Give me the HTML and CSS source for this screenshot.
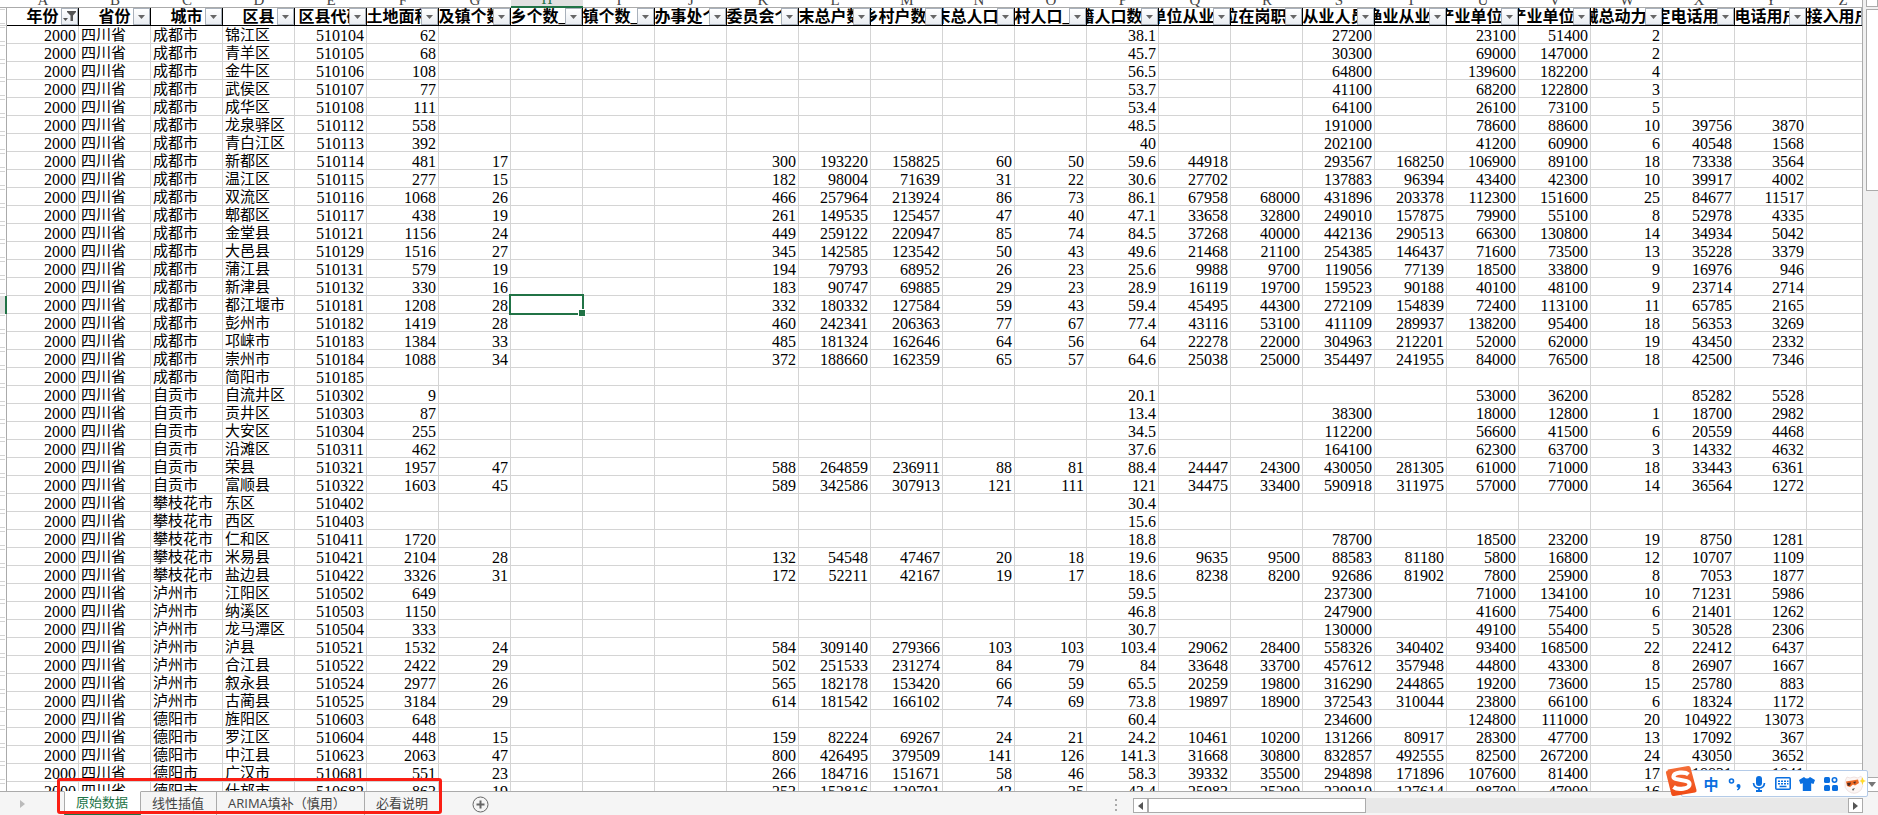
FILE: index.html
```
<!DOCTYPE html>
<html lang="zh-CN">
    <head>
        <meta charset="utf-8">
        <title>原始数据</title>
        <link rel="stylesheet" href="styles.css">
    </head>
    <body>
        <main class="workspace">
            <div class="sheet">
                <table class="grid">
                    <colgroup id="cols"></colgroup>
                    <thead>
                        <tr class="letters" id="letters"></tr>
                        <tr class="titles" id="titles"></tr>
                    </thead>
                    <tbody id="rows"></tbody>
                </table>
            </div>
            <div class="vscroll">
                <button class="vscroll-up" aria-label="向上滚动"></button>
                <div class="vscroll-thumb"></div>
                <button class="vscroll-down" aria-label="向下滚动">
                    <svg width="8" height="5" viewBox="0 0 8 5"><path d="M0 0h8L4 5z" fill="#777"/></svg>
                </button>
            </div>
        </main>

        <footer class="bar">
            <button class="bar-nav" aria-label="下一张工作表">
                <svg width="5" height="8" viewBox="0 0 5 8"><path d="M0 0l5 4-5 4z" fill="#bbb"/></svg>
            </button>
            <nav class="tabs">
                <button class="tab tab-active">原始数据</button>
                <button class="tab">线性插值</button>
                <button class="tab tab-wide">ARIMA填补（慎用）</button>
                <button class="tab tab-last">必看说明</button>
                <span class="marker"></span>
            </nav>
            <button class="add" aria-label="新工作表">
                <svg width="17" height="17" viewBox="0 0 17 17" fill="none" stroke="#666">
                    <circle cx="8.5" cy="8.5" r="7.5"/>
                    <path d="M8.5 4.5v8M4.5 8.5h8" stroke-width="2"/>
                </svg>
            </button>
            <svg class="grip" width="3" height="13" viewBox="0 0 3 13" fill="#aaa">
                <path d="M0 0h2v2H0zM0 5h2v2H0zM0 10h2v2H0z"/>
            </svg>
            <div class="hscroll">
                <button class="hscroll-btn" aria-label="向左滚动">
                    <svg width="5" height="8" viewBox="0 0 5 8"><path d="M5 0L0 4l5 4z" fill="#555"/></svg>
                </button>
                <div class="hscroll-thumb"></div>
                <button class="hscroll-btn hscroll-right" aria-label="向右滚动">
                    <svg width="5" height="8" viewBox="0 0 5 8"><path d="M0 0l5 4-5 4z" fill="#555"/></svg>
                </button>
            </div>
        </footer>

        <div class="ime">
            <svg class="ime-logo" width="32" height="32" viewBox="0 0 32 32">
                <defs>
                    <linearGradient id="flame" x1="0" y1="0" x2="0" y2="1">
                        <stop offset="0" stop-color="#f4703a"/>
                        <stop offset="1" stop-color="#f04a14"/>
                    </linearGradient>
                </defs>
                <path d="M3 5.500Q2 5 3 4.500L23 1q2-.3 2.500 1.500L31.500 25q.5 2-1.500 2.500L9 31q-2 .3-2.600-1.500L1 8q-.5-2 2-2.500z" fill="url(#flame)"/>
                <path d="M23.500 9.500C20 6.500 9 7 8.500 11.500 8 16 24 14 24.500 19c.4 5-11.500 6.500-16 3" fill="none" stroke="#fff" stroke-width="4.200"/>
            </svg>
            <div class="ime-keys">
                <button class="ime-key">中</button>
                <button class="ime-key" aria-label="标点">
                    <svg width="14" height="16" viewBox="0 0 14 16">
                        <circle cx="3.500" cy="5" r="2" fill="none" stroke="#0a6fe0" stroke-width="1.600"/>
                        <path d="M8.500 10a2 2 0 1 1 4 0q0 3-3 4.500l-.6-1q1.300-.8 1.400-1.700-1.800-.2-1.800-1.800z" fill="#0a6fe0"/>
                    </svg>
                </button>
                <button class="ime-key" aria-label="语音">
                    <svg width="14" height="16" viewBox="0 0 14 16" fill="none" stroke="#0a6fe0">
                        <rect x="4" y="0" width="6" height="10" rx="3" fill="#0a6fe0" stroke="none"/>
                        <path d="M1.500 7q.5 5 5.500 5t5.500-5" stroke-width="1.700"/>
                        <path d="M7 12v2M4 15h6" stroke-width="1.800"/>
                    </svg>
                </button>
                <button class="ime-key" aria-label="键盘">
                    <svg width="16" height="13" viewBox="0 0 16 13">
                        <rect x=".8" y=".8" width="14.400" height="11.400" rx="1" fill="none" stroke="#0a6fe0" stroke-width="1.600"/>
                        <path d="M3 3.500h2v1.600H3zM6 3.500h2v1.600H6zM9 3.500h2v1.600H9zM12 3.500h1.500v1.600H12zM3 6h2v1.600H3zM6 6h2v1.600H6zM9 6h2v1.600H9zM12 6h1.500v1.600H12zM4.500 8.800h7v1.500h-7z" fill="#0a6fe0"/>
                    </svg>
                </button>
                <button class="ime-key" aria-label="皮肤">
                    <svg width="16" height="14" viewBox="0 0 16 14">
                        <path d="M0 3L5 0q3 3 6 0l5 3-1.500 4-2.300-.7V14H3.800V6.300L1.500 7z" fill="#0a6fe0"/>
                    </svg>
                </button>
                <button class="ime-key" aria-label="工具箱">
                    <svg width="14" height="14" viewBox="0 0 14 14" fill="#0a6fe0">
                        <rect x="0" y="0" width="6" height="6" rx="1.500"/>
                        <rect x="0" y="8" width="6" height="6" rx="1.500"/>
                        <rect x="8" y="8" width="6" height="6" rx="1.500"/>
                        <circle cx="10.500" cy="3" r="2.200" fill="none" stroke="#0a6fe0" stroke-width="1.600"/>
                    </svg>
                </button>
                <button class="ime-key" aria-label="表情">
                    <svg width="22" height="20" viewBox="0 0 22 20">
                        <path d="M3 3l3 1q4-2 8 0l3-2 1 5q2 5-1 9-6 6-13 1-4-3-3-8 0-3 2-6z" fill="#fdf6f4" stroke="#ead9d6" stroke-width=".7"/>
                        <path d="M2 7.500l12-2 1 3.500-4 2.500-2-1-3 2.500-3-1z" fill="#ee6a26"/>
                        <path d="M3 9l4-.5-1 3-2 .5zM9 8l3-.5-1 2.500z" fill="#4a2a20"/>
                        <path d="M8 15l3-1-2 3z" fill="#555"/>
                        <path d="M18.500 3l1 3 2.500 1-2.500 1-1 3-1-3-2-1 2-1z" fill="#ffd928"/>
                    </svg>
                </button>
            </div>
        </div>

        <script src="script.js"></script>
    </body>
</html>
```
FILE: styles.css
```
* {
    box-sizing: border-box;
}
body {
    background: #f5f5f5;
    color: #000;
    display: flex;
        flex-direction: column;
    font-family: "Liberation Serif", "Noto Sans CJK SC", serif;
    font-size: 16px;
    height: 100vh;
    margin: 0;
    overflow: hidden;
}
button {
    background: none;
    border: 0;
    color: inherit;
    font: inherit;
    margin: 0;
    padding: 0;
}
svg {
    display: block;
    flex-shrink: 0;
}

/* sheet */
.workspace {
    display: flex;
    flex: 1;
    min-height: 0;
}
.sheet {
    background: #fff;
    border-right: solid 1px #ababab;
    flex: 1;
    min-width: 0;
    overflow: hidden;
}
.grid {
    border-collapse: separate;
    border-spacing: 0;
    table-layout: fixed;
    width: 1879px;
}
.col-index {
    width: 7px;
}
.col {
    width: 72px;
}
.grid th,
.grid td {
    padding: 0;
}
.letters th {
    background: #fff;
    border-bottom: solid 1px #ababab;
    color: #444;
    font-size: 15px;
    font-weight: normal;
    height: 8px;
    line-height: 8px;
}
.letter {
    display: flex;
        align-items: flex-end;
        justify-content: center;
    height: 7px;
    line-height: 14px;
    overflow: hidden;
}
.letters .picked {
    background: #e1e1e1;
    border-bottom: solid 2px #217346;
    color: #217346;
}
.picked .letter {
    height: 6px;
}
.titles th {
    border-bottom: solid 1px #000;
    border-right: solid 1px #000;
    height: 18px;
    position: relative;
}
.titles .index {
    border-bottom-color: #d4d4d4;
    border-right-color: #ababab;
}
.title {
    display: flex;
        justify-content: center;
    height: 17px;
    line-height: 17px;
    overflow: hidden;
    white-space: nowrap;
}
.filter {
    background: linear-gradient(#fff, #e9edf2);
    border: solid 1px #a9b1bb;
    display: flex;
        align-items: center;
        justify-content: center;
    height: 17px;
    position: absolute;
        right: 0;
        top: 0;
    width: 17px;
}
.grid td {
    border-bottom: solid 1px #d4d4d4;
    border-right: solid 1px #d4d4d4;
    height: 18px;
    line-height: 15px;
    padding: 2px 2px 0 0;
    text-align: right;
    white-space: nowrap;
}
.grid .name {
    font-size: 15px;
    padding: 2px 0 0 2px;
    text-align: left;
}
/* double ticks where rows are hidden by the filter */
.index {
    background: linear-gradient(#d4d4d4, #d4d4d4) 0 1px / 5px 1px no-repeat,
        linear-gradient(#d4d4d4, #d4d4d4) 0 15px / 5px 1px no-repeat;
    border-right: solid 1px #ababab;
}
.index-picked {
    background: #e1e1e1;
    border-right: solid 2px #217346;
}
.grid .selected {
    position: relative;
}
.selected::before {
    border: solid 2px #217346;
    content: "";
    inset: -2px;
    position: absolute;
}
.selected::after {
    background: #217346;
    border: solid 1px #fff;
    bottom: -4px;
    content: "";
    height: 6px;
    position: absolute;
    right: -4px;
    width: 6px;
}

/* vertical scrollbar */
.vscroll {
    background: #f0f0f0;
    display: flex;
        flex-direction: column;
    padding-left: 3px;
    width: 15px;
}
.vscroll-up {
    background: #fff;
    border: solid 1px #ababab;
    border-top: 0;
    height: 7px;
}
.vscroll-thumb {
    background: #fff;
    border: solid 1px #ababab;
    border-right: 0;
    height: 182px;
    margin-top: 2px;
}
.vscroll-down {
    background: #fff;
    border-top: solid 1px #ababab;
    display: flex;
        align-items: center;
        justify-content: center;
    height: 14px;
    margin-top: auto;
}

/* sheet tabs */
.bar {
    align-items: stretch;
    color: #444;
    display: flex;
    font-family: "Open Sans", "Noto Sans CJK SC", sans-serif;
    font-size: 13px;
    height: 24px;
}
.bar-nav {
    border-top: solid 1px #ababab;
    display: flex;
        align-items: center;
        justify-content: center;
    padding-right: 20px;
    width: 64px;
}
.tabs {
    display: flex;
    position: relative;
}
.tab {
    border-right: solid 1px #ababab;
    border-top: solid 1px #ababab;
    line-height: 23px;
    padding: 0 12px 0 11px;
    white-space: nowrap;
}
.tab-active {
    background: #fff;
    border-bottom: solid 2px #217346;
    border-left: solid 1px #ababab;
    border-top-color: #fff;
    color: #217346;
    line-height: 21px;
}
.tab-wide {
    text-align: left;
    width: 148px;
}
.tab-last {
    border-right: 0;
}
.marker {
    border: solid 3px #fb1e14;
    border-radius: 3px;
    inset: -13px -2px 1px -7px;
    pointer-events: none;
    position: absolute;
}
.add {
    border-top: solid 1px #ababab;
    display: flex;
        align-items: center;
    flex: 1;
    padding: 2px 0 0 32px;
}
.grip {
    border-top: solid 1px #ababab;
    box-sizing: content-box;
    height: 13px;
    padding: 7px 15px 3px 0;
}
.hscroll {
    background: #e8e8e8;
    background-clip: content-box;
    border-top: solid 1px #ababab;
    display: flex;
    flex: 0 0 745px;
    padding: 6px 15px 2px 0;
}
.hscroll-btn {
    background: #fff;
    border: solid 1px #ababab;
    display: flex;
        align-items: center;
        justify-content: center;
    width: 15px;
}
.hscroll-right {
    margin-left: auto;
}
.hscroll-thumb {
    background: #fff;
    border: solid 1px #ababab;
    width: 218px;
}

/* floating input method bar */
.ime {
    align-items: flex-end;
    bottom: 18px;
    display: flex;
    position: absolute;
    right: 10px;
}
.ime-logo {
    margin-right: -16px;
    z-index: 1;
}
.ime-keys {
    background: #fff;
    border: solid 1px #b4cbe8;
    border-radius: 2px;
    display: flex;
    height: 27px;
    padding-left: 17px;
}
.ime-key {
    color: #0a6fe0;
    display: flex;
        align-items: center;
        justify-content: center;
    font-family: "Noto Sans CJK SC", sans-serif;
    font-size: 15px;
    font-weight: bold;
    line-height: 24px;
    width: 24px;
}
```
FILE: script.js
```
const titles = [
    '年份', '省份', '城市', '区县', '区县代码', '行政区域土地面积_平方公里', '乡及镇个数_个',
    '乡个数_个', '镇个数_个', '街道办事处个数_个', '村民委员会个数_个', '年末总户数_户',
    '乡村户数_户', '年末总人口_万人', '乡村人口_万人', '户籍人口数_万人', '城镇单位从业人员_人',
    '城镇单位在岗职工人数_人', '乡村从业人员数_人', '农林牧渔业从业人员数_人', '第二产业单位人数_人',
    '第三产业单位人数_人', '农业机械总动力_万千瓦特', '固定电话用户_户', '移动电话用户_万户',
    '宽带接入用户数_户',
];

// city, county, code, then columns F-G and K-Y (H-J and Z are empty)
const data = `
成都市,锦江区,510104,62,,,,,,,38.1,,,27200,,23100,51400,2,,
成都市,青羊区,510105,68,,,,,,,45.7,,,30300,,69000,147000,2,,
成都市,金牛区,510106,108,,,,,,,56.5,,,64800,,139600,182200,4,,
成都市,武侯区,510107,77,,,,,,,53.7,,,41100,,68200,122800,3,,
成都市,成华区,510108,111,,,,,,,53.4,,,64100,,26100,73100,5,,
成都市,龙泉驿区,510112,558,,,,,,,48.5,,,191000,,78600,88600,10,39756,3870
成都市,青白江区,510113,392,,,,,,,40,,,202100,,41200,60900,6,40548,1568
成都市,新都区,510114,481,17,300,193220,158825,60,50,59.6,44918,,293567,168250,106900,89100,18,73338,3564
成都市,温江区,510115,277,15,182,98004,71639,31,22,30.6,27702,,137883,96394,43400,42300,10,39917,4002
成都市,双流区,510116,1068,26,466,257964,213924,86,73,86.1,67958,68000,431896,203378,112300,151600,25,84677,11517
成都市,郫都区,510117,438,19,261,149535,125457,47,40,47.1,33658,32800,249010,157875,79900,55100,8,52978,4335
成都市,金堂县,510121,1156,24,449,259122,220947,85,74,84.5,37268,40000,442136,290513,66300,130800,14,34934,5042
成都市,大邑县,510129,1516,27,345,142585,123542,50,43,49.6,21468,21100,254385,146437,71600,73500,13,35228,3379
成都市,蒲江县,510131,579,19,194,79793,68952,26,23,25.6,9988,9700,119056,77139,18500,33800,9,16976,946
成都市,新津县,510132,330,16,183,90747,69885,29,23,28.9,16119,19700,159523,90188,40100,48100,9,23714,2714
成都市,都江堰市,510181,1208,28,332,180332,127584,59,43,59.4,45495,44300,272109,154839,72400,113100,11,65785,2165
成都市,彭州市,510182,1419,28,460,242341,206363,77,67,77.4,43116,53100,411109,289937,138200,95400,18,56353,3269
成都市,邛崃市,510183,1384,33,485,181324,162646,64,56,64,22278,22000,304963,212201,52000,62000,19,43450,2332
成都市,崇州市,510184,1088,34,372,188660,162359,65,57,64.6,25038,25000,354497,241955,84000,76500,18,42500,7346
成都市,简阳市,510185,,,,,,,,,,,,,,,,,
自贡市,自流井区,510302,9,,,,,,,20.1,,,,,53000,36200,,85282,5528
自贡市,贡井区,510303,87,,,,,,,13.4,,,38300,,18000,12800,1,18700,2982
自贡市,大安区,510304,255,,,,,,,34.5,,,112200,,56600,41500,6,20559,4468
自贡市,沿滩区,510311,462,,,,,,,37.6,,,164100,,62300,63700,3,14332,4632
自贡市,荣县,510321,1957,47,588,264859,236911,88,81,88.4,24447,24300,430050,281305,61000,71000,18,33443,6361
自贡市,富顺县,510322,1603,45,589,342586,307913,121,111,121,34475,33400,590918,311975,57000,77000,14,36564,1272
攀枝花市,东区,510402,,,,,,,,30.4,,,,,,,,,
攀枝花市,西区,510403,,,,,,,,15.6,,,,,,,,,
攀枝花市,仁和区,510411,1720,,,,,,,18.8,,,78700,,18500,23200,19,8750,1281
攀枝花市,米易县,510421,2104,28,132,54548,47467,20,18,19.6,9635,9500,88583,81180,5800,16800,12,10707,1109
攀枝花市,盐边县,510422,3326,31,172,52211,42167,19,17,18.6,8238,8200,92686,81902,7800,25900,8,7053,1877
泸州市,江阳区,510502,649,,,,,,,59.5,,,237300,,71000,134100,10,71231,5986
泸州市,纳溪区,510503,1150,,,,,,,46.8,,,247900,,41600,75400,6,21401,1262
泸州市,龙马潭区,510504,333,,,,,,,30.7,,,130000,,49100,55400,5,30528,2306
泸州市,泸县,510521,1532,24,584,309140,279366,103,103,103.4,29062,28400,558326,340402,93400,168500,22,22412,6437
泸州市,合江县,510522,2422,29,502,251533,231274,84,79,84,33648,33700,457612,357948,44800,43300,8,26907,1667
泸州市,叙永县,510524,2977,26,565,182178,153420,66,59,65.5,20259,19800,316290,244865,19200,73600,15,25780,883
泸州市,古蔺县,510525,3184,29,614,181542,166102,74,69,73.8,19897,18900,372543,310044,23800,66100,6,18324,1172
德阳市,旌阳区,510603,648,,,,,,,60.4,,,234600,,124800,111000,20,104922,13073
德阳市,罗江区,510604,448,15,159,82224,69267,24,21,24.2,10461,10200,131266,80917,28300,47700,13,17092,367
德阳市,中江县,510623,2063,47,800,426495,379509,141,126,141.3,31668,30800,832857,492555,82500,267200,24,43050,3652
德阳市,广汉市,510681,551,23,266,184716,151671,58,46,58.3,39332,35500,294898,171896,107600,81400,17,18831,1841
德阳市,什邡市,510682,863,19,253,152816,120701,43,35,43.4,25983,25200,229910,127614,98700,47000,16,24310,1620
`.trim().split('\n').map(line => line.split(','));

const arrow = '<svg width="7" height="4" viewBox="0 0 7 4"><path d="M0 0h7L3.5 4z" fill="#666"/></svg>';
const funnel = '<svg width="13" height="11" viewBox="0 0 13 11"><path d="M4 0h9v1L10 4.500V10H7.500V4.500L4 1zM0 7h5L2.500 10z" fill="#555"/></svg>';
const selected = {row: 15, col: 7};

cols.innerHTML = '<col class="col-index">' + titles.map(() => '<col class="col">').join('');

letters.innerHTML = '<th></th>' + titles.map((title, i) => `
    <th class="${i === selected.col ? 'picked' : ''}"><div class="letter">${String.fromCharCode(65 + i)}</div></th>
`).join('');

document.getElementById('titles').innerHTML = '<th class="index"></th>' + titles.map((title, i) => `
    <th>
        <div class="title">${title}</div>
        <button class="filter" aria-label="筛选">${i === 0 ? funnel : arrow}</button>
    </th>
`).join('');

rows.innerHTML = data.map((line, r) => {
    const cells = ['2000', '四川省', ...line.slice(0, 5), '', '', '', ...line.slice(5), ''];
    return `<tr><th class="index ${r === selected.row ? 'index-picked' : ''}"></th>` + cells.map((cell, c) => {
        const name = c > 0 && c < 4 ? 'name' : '';
        const mark = r === selected.row && c === selected.col ? 'selected' : '';
        return `<td class="${name}${mark}">${cell}</td>`;
    }).join('') + '</tr>';
}).join('');
```
